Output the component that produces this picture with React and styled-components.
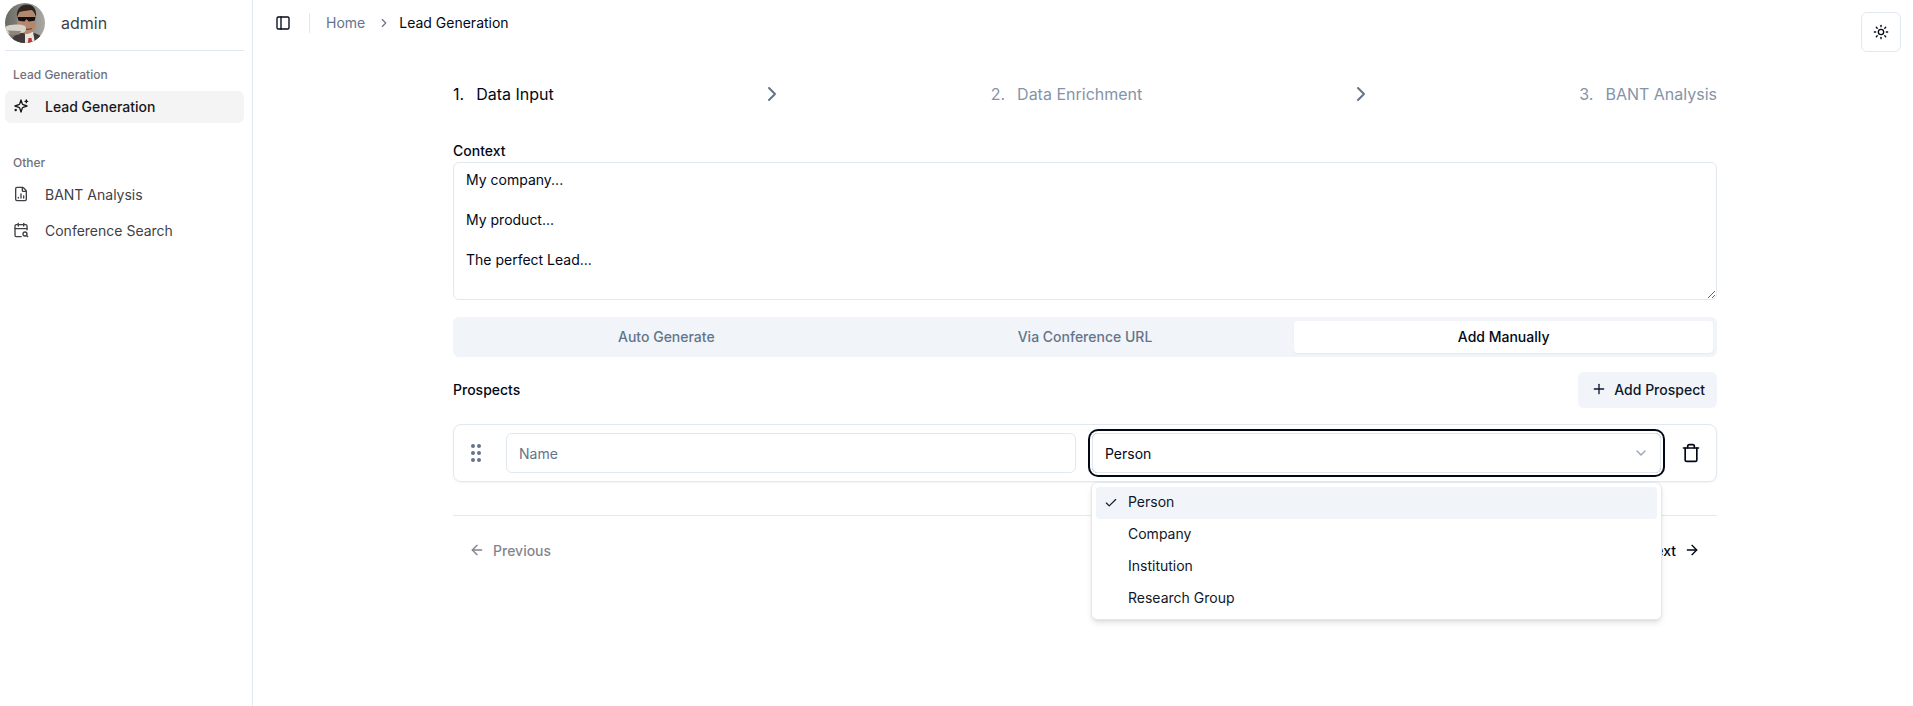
import React from 'react';
import styled, { createGlobalStyle } from 'styled-components';
import {
  ArrowLeft,
  ArrowRight,
  CalendarSearch,
  Check,
  ChevronDown,
  ChevronRight,
  FileChartColumn,
  GripVertical,
  PanelLeft,
  Plus,
  Sun,
  Trash,
} from 'lucide-react';

const GlobalStyle = createGlobalStyle`
  * {
    box-sizing: border-box;
  }

  body {
    margin: 0;
    background: #fff;
    color: #020817;
    font-family: Inter, "Liberation Sans", sans-serif;
    font-size: 14px;
  }
`;

const Page = styled.div`
  display: flex;
  height: 706px;
  overflow: hidden;
`;

const Sidebar = styled.aside`
  width: 253px;
  flex: none;
  padding: 3px 8px 0 5px;
  border-right: 1px solid #e2e8f0;
`;

const UserRow = styled.div`
  display: flex;
  align-items: center;
  gap: 16px;
  height: 48px;
  padding-bottom: 8px;
  border-bottom: 1px solid #e2e8f0;
  font-size: 16px;
  color: #3f3f46;
`;

const Group = styled.div`
  margin-top: ${(p) => p.$top}px;
`;

const GroupLabel = styled.div`
  height: 32px;
  padding-left: 8px;
  line-height: 32px;
  font-size: 12px;
  font-weight: 500;
  color: #71717a;
`;

const NavList = styled.div`
  display: flex;
  flex-direction: column;
  gap: 4px;
`;

const NavItem = styled.div`
  display: flex;
  align-items: center;
  gap: 16px;
  height: 32px;
  padding: 0 0 2px 8px;
  border-radius: 6px;
  background: ${(p) => (p.$active ? '#f4f4f5' : 'transparent')};
  color: ${(p) => (p.$active ? '#18181b' : '#3f3f46')};
  font-weight: ${(p) => (p.$active ? 500 : 400)};
`;

const Main = styled.main`
  flex: 1;
  min-width: 0;
`;

const TopBar = styled.header`
  display: flex;
  align-items: flex-start;
  justify-content: space-between;
  height: 56px;
  padding: 12px 12px 0 22px;
`;

const Breadcrumbs = styled.nav`
  display: flex;
  align-items: center;
  height: 21px;
  color: #64748b;
`;

const Separator = styled.span`
  width: 1px;
  height: 20px;
  margin: 0 16px 0 18px;
  background: #e2e8f0;
`;

const Crumb = styled.span`
  color: ${(p) => (p.$current ? '#020817' : '#64748b')};
`;

const ThemeButton = styled.button`
  display: flex;
  align-items: center;
  justify-content: center;
  width: 40px;
  height: 40px;
  padding: 0;
  border: 1px solid #e2e8f0;
  border-radius: 6px;
  background: #fff;
  color: #020817;
`;

const Content = styled.div`
  width: 1264px;
  margin-left: 200px;
`;

const Steps = styled.div`
  display: flex;
  align-items: center;
  justify-content: space-between;
  height: 24px;
  margin-top: 26px;
`;

const Step = styled.div`
  display: flex;
  gap: 12px;
  font-size: 16px;
  color: ${(p) => (p.$active ? '#020817' : '#8593a8')};
`;

const FieldLabel = styled.label`
  display: block;
  font-weight: 500;
  line-height: 20px;
`;

const ContextLabel = styled(FieldLabel)`
  margin-top: 35px;
  margin-bottom: 1px;
`;

const ContextArea = styled.textarea`
  display: block;
  width: 100%;
  height: 138px;
  padding: 7px 12px;
  border: 1px solid #e2e8f0;
  border-radius: 6px;
  outline: none;
  color: #020817;
  font: 14px/20px Inter, "Liberation Sans", sans-serif;
`;

const Tabs = styled.div`
  display: grid;
  grid-template-columns: repeat(3, 1fr);
  height: 40px;
  margin-top: 17px;
  padding: 4px;
  border-radius: 6px;
  background: #f1f5f9;
`;

const Tab = styled.div`
  display: flex;
  align-items: center;
  justify-content: center;
  padding-bottom: 2px;
  border-radius: 4px;
  background: ${(p) => (p.$active ? '#fff' : 'transparent')};
  box-shadow: ${(p) => (p.$active ? '0 1px 2px rgba(0, 0, 0, 0.05)' : 'none')};
  color: ${(p) => (p.$active ? '#020817' : '#64748b')};
  font-weight: 500;
`;

const ProspectsHeader = styled.div`
  display: flex;
  align-items: center;
  justify-content: space-between;
  margin-top: 15px;
`;

const AddButton = styled.button`
  display: flex;
  align-items: center;
  gap: 7px;
  height: 36px;
  padding: 0 12px 2px 13px;
  border: 0;
  border-radius: 6px;
  background: #f1f5f9;
  color: #0f172a;
  font: 500 14px Inter, "Liberation Sans", sans-serif;
`;

const ProspectCard = styled.div`
  display: flex;
  align-items: center;
  height: 58px;
  margin-top: 16px;
  padding: 0 7px 0 10px;
  border: 1px solid #e2e8f0;
  border-radius: 8px;
  box-shadow: 0 1px 2px rgba(0, 0, 0, 0.05);
`;

const DragHandle = styled.div`
  display: flex;
  flex: none;
  width: 42px;
  color: #64748b;
`;

const NameInput = styled.input`
  flex: none;
  width: 570px;
  height: 40px;
  padding: 0 12px;
  border: 1px solid #e2e8f0;
  border-radius: 6px;
  outline: none;
  font: 14px Inter, "Liberation Sans", sans-serif;

  &::placeholder {
    color: #64748b;
  }
`;

const SelectWrap = styled.div`
  position: relative;
  flex: none;
  width: 569px;
  margin-left: 16px;
`;

const SelectTrigger = styled.div`
  display: flex;
  align-items: center;
  justify-content: space-between;
  height: 40px;
  padding: 0 11px 0 12px;
  border: 1px solid #e2e8f0;
  border-radius: 6px;
  box-shadow: 0 0 0 2px #fff, 0 0 0 4px #020817;
  color: #020817;
`;

const Menu = styled.div`
  position: absolute;
  z-index: 10;
  top: 49px;
  left: -1px;
  width: 571px;
  padding: 4px;
  border: 1px solid #e2e8f0;
  border-radius: 6px;
  background: #fff;
  box-shadow: 0 4px 6px -1px rgba(0, 0, 0, 0.1), 0 2px 4px -2px rgba(0, 0, 0, 0.1);
`;

const MenuItem = styled.div`
  position: relative;
  height: 32px;
  padding-left: 32px;
  border-radius: 4px;
  background: ${(p) => (p.$selected ? '#f1f5f9' : 'transparent')};
  color: #0f172a;
  line-height: 30px;
`;

const CheckMark = styled.span`
  position: absolute;
  top: 9px;
  left: 8px;
  display: flex;
`;

const DeleteButton = styled.button`
  display: flex;
  flex: none;
  align-items: center;
  justify-content: center;
  width: 36px;
  height: 36px;
  margin-left: 12px;
  padding: 0;
  border: 0;
  background: none;
  color: #020817;
`;

const Footer = styled.div`
  display: flex;
  align-items: center;
  justify-content: space-between;
  margin-top: 33px;
  padding: 14px 17px 0 16px;
  border-top: 1px solid #e2e8f0;
`;

const PagerButton = styled.div`
  display: flex;
  align-items: center;
  gap: 8px;
  height: 40px;
  color: #020817;
  font-weight: 500;
  opacity: ${(p) => (p.$disabled ? 0.5 : 1)};
`;

const SparkleIcon = () => (
  <svg
    width="16"
    height="16"
    viewBox="0 0 24 24"
    fill="none"
    stroke="currentColor"
    strokeWidth="2"
    strokeLinecap="round"
    strokeLinejoin="round"
  >
    <path d="m12 3-1.912 5.813a2 2 0 0 1-1.275 1.275L3 12l5.813 1.912a2 2 0 0 1 1.275 1.275L12 21l1.912-5.813a2 2 0 0 1 1.275-1.275L21 12l-5.813-1.912a2 2 0 0 1-1.275-1.275L12 3Z" />
    <path d="M20 3v4" />
    <path d="M22 5h-4" />
    <path d="M4 17v2" />
    <path d="M5 18H3" />
  </svg>
);

const Avatar = () => (
  <svg width="40" height="40" viewBox="0 0 40 40" style={{ flex: 'none' }}>
    <defs>
      <clipPath id="avatar-clip">
        <circle cx="20" cy="20" r="20" />
      </clipPath>
      <linearGradient id="avatar-bg" x1="0" y1="0" x2="1" y2="0">
        <stop offset="0" stopColor="#6a6a64" />
        <stop offset="1" stopColor="#a9a8a2" />
      </linearGradient>
    </defs>
    <g clipPath="url(#avatar-clip)">
      <rect width="40" height="40" fill="url(#avatar-bg)" />
      <path d="M6 40c0-7 8-11 15-11s19 3 19 11z" fill="#3f3a38" />
      <path d="M20 30l8-1 2 11H20z" fill="#e9e6e0" />
      <path d="M23.500 35h3l.8 5h-4.500z" fill="#b23c34" />
      <ellipse cx="21.500" cy="18" rx="9.500" ry="13" fill="#b5876c" />
      <path d="M12 14C11 6 16 1.500 22 1.500s10 4.500 9 12.500c-1-3-2.500-6-4.500-7-5 1-10 1-12 2-1 1-1.500 3-2.500 5z" fill="#30241e" />
      <path d="M12.500 14h18l-.8 3.800-6 .7-2.200-2.500-2 2.500-6-.7z" fill="#111012" />
      <path d="M17 25.500c3 1 7 1 10 0" stroke="#6a4738" strokeWidth="1.200" fill="none" />
      <path d="M0 24c5-3 15-3 20-1 2 3 1 6-3 7l-12 1-5-1z" fill="#d6d3cb" />
      <path d="M3 27.500l13 .5-1.500 3.500-9.500.5z" fill="#8f8678" />
    </g>
  </svg>
);

const App = () => (
  <>
    <GlobalStyle />
    <Page>
      <Sidebar>
        <UserRow>
          <Avatar />
          admin
        </UserRow>
        <Group $top={8}>
          <GroupLabel>Lead Generation</GroupLabel>
          <NavList>
            <NavItem $active>
              <SparkleIcon />
              Lead Generation
            </NavItem>
          </NavList>
        </Group>
        <Group $top={24}>
          <GroupLabel>Other</GroupLabel>
          <NavList>
            <NavItem>
              <FileChartColumn size={16} />
              BANT Analysis
            </NavItem>
            <NavItem>
              <CalendarSearch size={16} />
              Conference Search
            </NavItem>
          </NavList>
        </Group>
      </Sidebar>
      <Main>
        <TopBar>
          <Breadcrumbs>
            <PanelLeft size={16} color="#020817" />
            <Separator />
            <Crumb>Home</Crumb>
            <ChevronRight size={14} style={{ margin: '0 8px 0 12px' }} />
            <Crumb $current>Lead Generation</Crumb>
          </Breadcrumbs>
          <ThemeButton>
            <Sun size={16} />
          </ThemeButton>
        </TopBar>
        <Content>
          <Steps>
            <Step $active>
              <span>1.</span>
              <span>Data Input</span>
            </Step>
            <ChevronRight size={24} color="#64748b" />
            <Step>
              <span>2.</span>
              <span>Data Enrichment</span>
            </Step>
            <ChevronRight size={24} color="#64748b" />
            <Step>
              <span>3.</span>
              <span>BANT Analysis</span>
            </Step>
          </Steps>
          <ContextLabel>Context</ContextLabel>
          <ContextArea defaultValue={'My company...\n\nMy product...\n\nThe perfect Lead...'} />
          <Tabs>
            <Tab>Auto Generate</Tab>
            <Tab>Via Conference URL</Tab>
            <Tab $active>Add Manually</Tab>
          </Tabs>
          <ProspectsHeader>
            <FieldLabel>Prospects</FieldLabel>
            <AddButton>
              <Plus size={16} />
              Add Prospect
            </AddButton>
          </ProspectsHeader>
          <ProspectCard>
            <DragHandle>
              <GripVertical size={24} />
            </DragHandle>
            <NameInput placeholder="Name" />
            <SelectWrap>
              <SelectTrigger>
                Person
                <ChevronDown size={16} color="#94a3b8" />
              </SelectTrigger>
              <Menu>
                <MenuItem $selected>
                  <CheckMark>
                    <Check size={14} />
                  </CheckMark>
                  Person
                </MenuItem>
                <MenuItem>Company</MenuItem>
                <MenuItem>Institution</MenuItem>
                <MenuItem>Research Group</MenuItem>
              </Menu>
            </SelectWrap>
            <DeleteButton>
              <Trash size={20} />
            </DeleteButton>
          </ProspectCard>
          <Footer>
            <PagerButton $disabled>
              <ArrowLeft size={16} />
              Previous
            </PagerButton>
            <PagerButton>
              Next
              <ArrowRight size={16} />
            </PagerButton>
          </Footer>
        </Content>
      </Main>
    </Page>
  </>
);

export default App;
